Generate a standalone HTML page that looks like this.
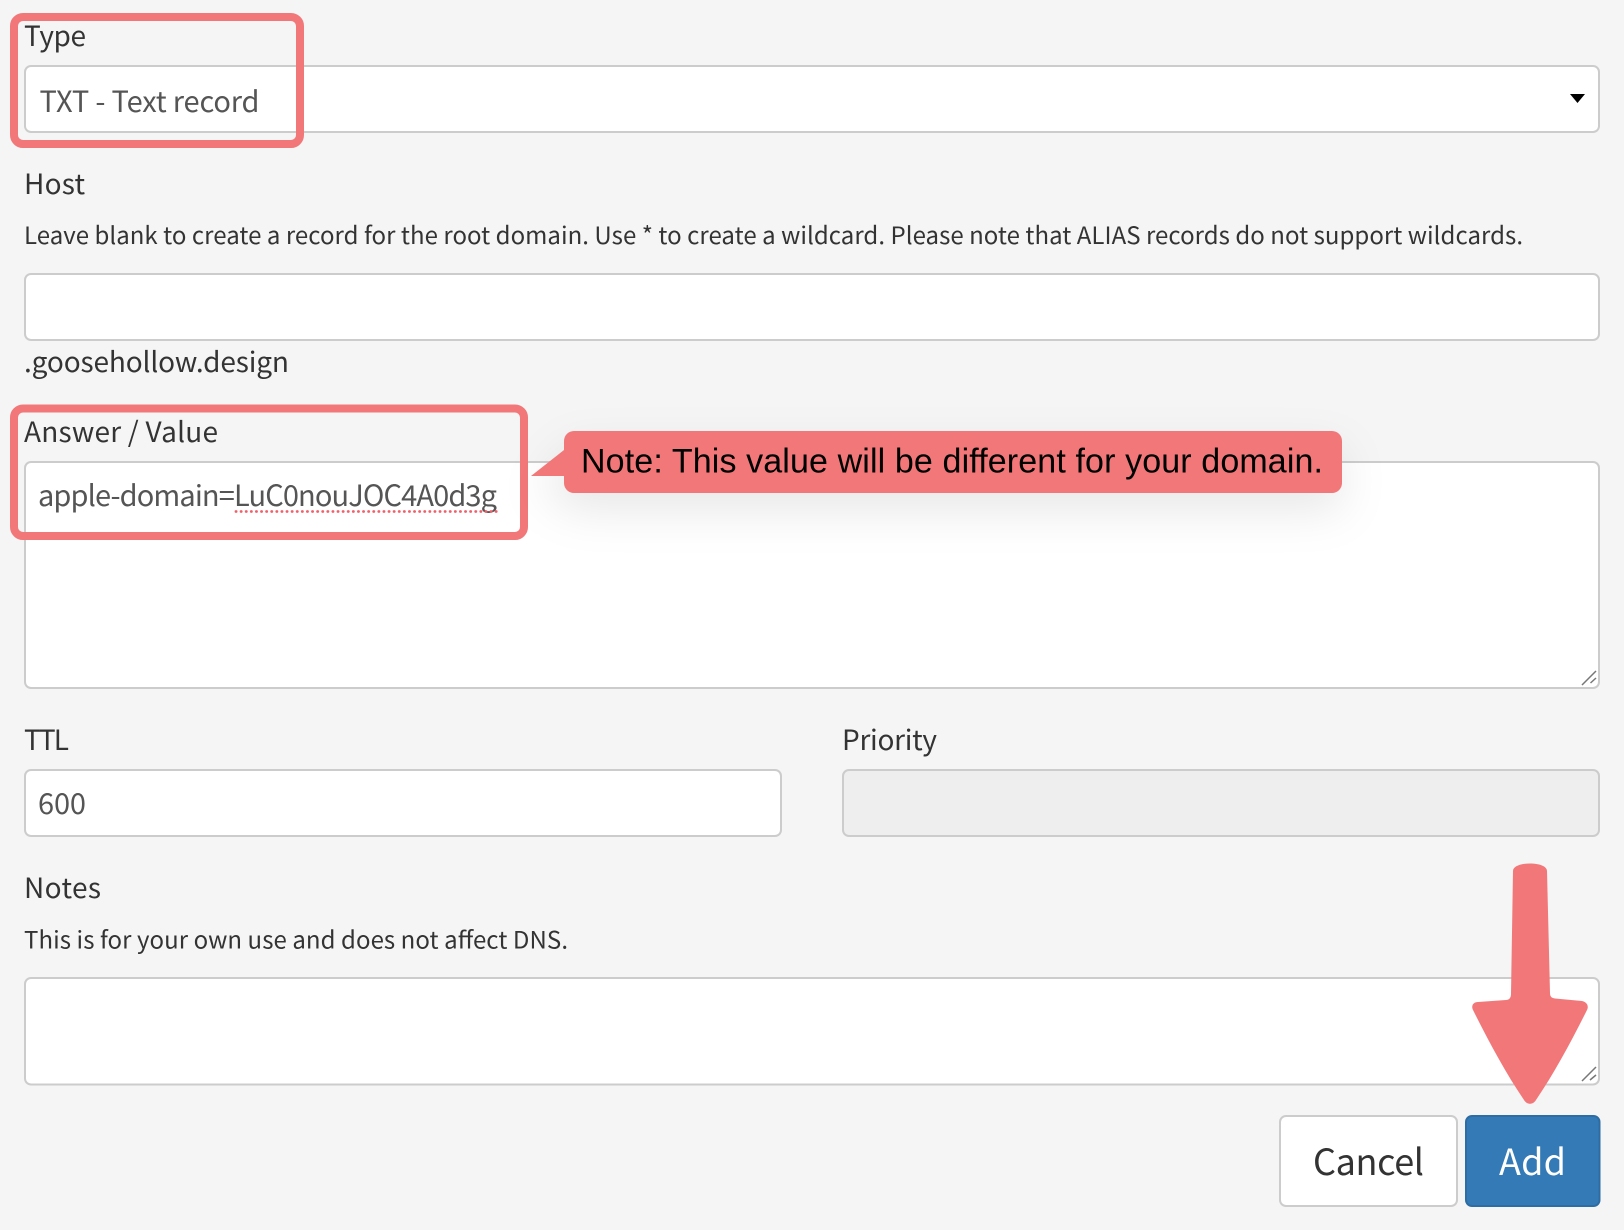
<!DOCTYPE html>
<html lang="en">
<head>
<meta charset="utf-8">
<title>Add DNS record</title>
<style>
html,body{margin:0;padding:0;background:#f5f5f5;width:1624px;height:1230px;overflow:hidden}
svg{display:block}
text{font-family:"Noto Sans CJK SC","DejaVu Sans",sans-serif;white-space:pre}
.l{font-size:28px;fill:#333}
.h{font-size:24px;fill:#333}
.v{font-size:29px;fill:#555}
.b{fill:#fff;stroke:#ccc;stroke-width:2}
.n{font-family:"Liberation Sans",sans-serif;font-size:34px;fill:#000}
</style>
</head>
<body>
<svg width="1624" height="1230" viewBox="0 0 1624 1230" xmlns="http://www.w3.org/2000/svg">
<defs>
<filter id="s" x="-20%" y="-150%" width="140%" height="450%">
<feDropShadow dx="0" dy="18" stdDeviation="22" flood-color="#000" flood-opacity="0.09"/>
</filter>
</defs>
<rect width="1624" height="1230" fill="#f5f5f5"/>

<text class="l" x="24" y="46" textLength="62" lengthAdjust="spacing">Type</text>
<rect class="b" x="25" y="66" width="1574" height="66" rx="6"/>
<text class="v" x="39.5" y="112" textLength="220" lengthAdjust="spacing">TXT - Text record</text>
<path d="M1570 94H1585L1577.5 103Z" fill="#000"/>

<text class="l" x="24" y="194" textLength="61" lengthAdjust="spacing">Host</text>
<text class="h" x="24" y="244" textLength="1499" lengthAdjust="spacing">Leave blank to create a record for the root domain. Use * to create a wildcard. Please note that ALIAS records do not support wildcards.</text>
<rect class="b" x="25" y="274" width="1574" height="66" rx="6"/>
<text class="l" x="24" y="372" textLength="265" lengthAdjust="spacing">.goosehollow.design</text>

<text class="l" x="24" y="442" textLength="194" lengthAdjust="spacing">Answer / Value</text>
<rect class="b" x="25" y="462" width="1574" height="226" rx="6"/>
<text class="v" x="38" y="506" textLength="459" lengthAdjust="spacing">apple-domain=LuC0nouJOC4A0d3g</text>
<path d="M236 511.500H497" stroke="#f0606a" stroke-width="2.800" stroke-linecap="round" stroke-dasharray="0.1 5" fill="none"/>
<path d="M1582 685L1596 671M1590.5 683L1596 678" stroke="#777" stroke-width="1.5" fill="none"/>

<text class="l" x="24" y="750" textLength="45" lengthAdjust="spacing">TTL</text>
<rect class="b" x="25" y="770" width="756" height="66" rx="6"/>
<text class="v" x="38" y="814" textLength="48" lengthAdjust="spacing">600</text>
<text class="l" x="842" y="750" textLength="95" lengthAdjust="spacing">Priority</text>
<rect x="843" y="770" width="756" height="66" rx="6" fill="#eee" stroke="#ccc" stroke-width="2"/>

<text class="l" x="24" y="898" textLength="77" lengthAdjust="spacing">Notes</text>
<text class="h" x="24" y="948.5" textLength="544" lengthAdjust="spacing">This is for your own use and does not affect DNS.</text>
<rect class="b" x="25" y="978" width="1574" height="106.500" rx="6"/>
<path d="M1582 1081L1596 1067M1590 1080L1596 1075" stroke="#777" stroke-width="1.5" fill="none"/>

<rect x="1280" y="1116" width="177" height="90" rx="6" fill="#fff" stroke="#ccc" stroke-width="2"/>
<text x="1313" y="1175" font-size="36" fill="#333" textLength="111" lengthAdjust="spacing">Cancel</text>
<rect x="1466" y="1116" width="133.500" height="90" rx="6" fill="#337ab7" stroke="#2e6da4" stroke-width="2"/>
<text x="1499" y="1175" font-size="36" fill="#fff" textLength="67" lengthAdjust="spacing">Add</text>

<rect x="14" y="17" width="286" height="127" rx="9" fill="none" stroke="#f27779" stroke-width="8"/>
<rect x="14" y="408.500" width="510" height="127.500" rx="9" fill="none" stroke="#f27779" stroke-width="8"/>

<path d="M574 431H1332a10 10 0 0 1 10 10V483a10 10 0 0 1-10 10H574a10 10 0 0 1-10-10V476H531L564 450V441a10 10 0 0 1 10-10Z" fill="#f27779" filter="url(#s)"/>
<text class="n" x="581" y="472.500" textLength="742" lengthAdjust="spacing">Note: This value will be different for your domain.</text>

<path d="M1513 871C1513 861 1547 861 1547 871L1550 993C1550 997 1552 998 1555 998.500L1582 1001C1587 1002 1589 1006 1587 1010C1572 1040 1555 1072 1536 1100C1533 1105 1527 1105 1524 1100C1505 1072 1488 1040 1473 1010C1471 1006 1473 1002 1478 1002L1506 1000C1509 1000 1511 998 1511 994Z" fill="#f27779"/>
</svg>
</body>
</html>
